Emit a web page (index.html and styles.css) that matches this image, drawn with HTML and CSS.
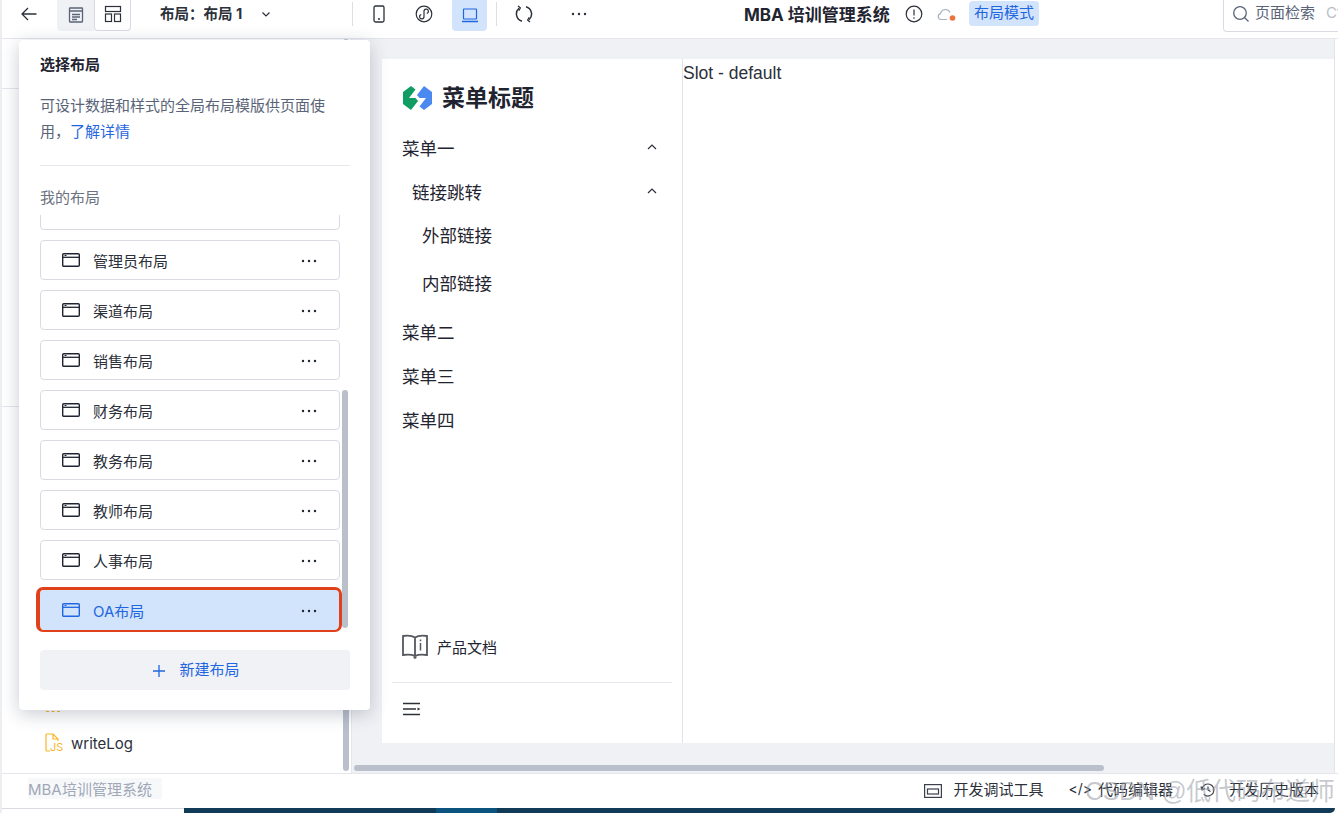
FILE: index.html
```html
<!DOCTYPE html>
<html lang="zh">
<head>
<meta charset="utf-8">
<title>MBA 培训管理系统</title>
<link rel="stylesheet" href="styles.css">
</head>
<body>
<svg class="sprite">
  <symbol id="win" viewBox="0 0 18 14">
    <rect x="0.700" y="0.700" width="16.600" height="12.600" rx="1" fill="none" stroke="currentColor" stroke-width="1.400"/>
    <path d="M1 4.300h16" stroke="currentColor" stroke-width="1.300"/>
    <path d="M2.500 2.500h2" stroke="currentColor" stroke-width="1"/>
  </symbol>
  <symbol id="dots" viewBox="0 0 16 4">
    <circle cx="2" cy="2" r="1.200"/><circle cx="8" cy="2" r="1.200"/><circle cx="14" cy="2" r="1.200"/>
  </symbol>
  <symbol id="up" viewBox="0 0 12 12">
    <path d="M2 8l4-4 4 4" fill="none" stroke="#2b303a" stroke-width="1.200"/>
  </symbol>
</svg>

<div class="app">

  <div class="topbar">
    <svg class="back" width="18" height="18" viewBox="0 0 18 18"><path d="M16.500 9H2M8 3 2 9l6 6" fill="none" stroke="#2b303a" stroke-width="1.300"/></svg>
    <div class="tab tab-on">
      <svg width="18" height="18" viewBox="0 0 18 18" fill="none" stroke="#5a6478" stroke-width="1.300"><rect x="2.500" y="2" width="13" height="14" rx="0.500"/><path d="M2.500 5h13M5 8.500h8M5 11h8M5 13.500h5"/></svg>
    </div>
    <div class="tab tab-line">
      <svg width="18" height="18" viewBox="0 0 18 18" fill="none" stroke="#2b303a" stroke-width="1.200"><rect x="1.500" y="1.500" width="15" height="5"/><rect x="1.500" y="9" width="6" height="7.500"/><rect x="10.500" y="9" width="6" height="7.500"/></svg>
    </div>
    <div class="layout-pick">布局：布局 1</div>
    <svg class="chev" width="12" height="12" viewBox="0 0 12 12"><path d="M2.500 4.500 6 8l3.500-3.500" fill="none" stroke="#2b303a" stroke-width="1.200"/></svg>
    <div class="vline line-a"></div>
    <svg class="phone" width="14" height="18" viewBox="0 0 14 18" fill="none" stroke="#2b303a" stroke-width="1.300"><rect x="2" y="1" width="10" height="16" rx="1.500"/><path d="M6 14h2"/></svg>
    <svg class="mini" width="18" height="18" viewBox="0 0 18 18" fill="none" stroke="#2b303a" stroke-width="1.200"><circle cx="9" cy="9" r="7.800"/><path d="M6.300 9.500a2.200 2.200 0 1 0 2.700 2V6.500a2.200 2.200 0 1 1 2.700 2"/></svg>
    <div class="laptop">
      <svg width="18" height="18" viewBox="0 0 18 18" fill="none" stroke="#1f66e0" stroke-width="1.200"><rect x="2.500" y="3" width="13" height="10" rx="0.500"/><path d="M1 15.500h16" stroke-width="1.500"/></svg>
    </div>
    <div class="vline line-b"></div>
    <svg class="sync" width="18" height="18" viewBox="0 0 18 18" fill="none" stroke="#2b303a" stroke-width="1.500"><path d="M7 16.300A7.600 7.600 0 0 1 4 3.300M11 1.700A7.600 7.600 0 0 1 14 14.700"/><path d="M3 1 5.400 3 3.800 5.600M15 17l-2.400-2 1.600-2.600" stroke-width="1.200"/></svg>
    <svg class="more-top" width="16" height="4" fill="#2b303a"><use href="#dots"/></svg>
    <div class="app-title">MBA 培训管理系统</div>
    <svg class="alert" width="18" height="18" viewBox="0 0 18 18" fill="none" stroke="#2b303a" stroke-width="1.200"><circle cx="9" cy="9" r="7.800"/><path d="M9 4.500v6M9 12.200v1.500"/></svg>
    <svg class="cloud" width="20" height="16" viewBox="0 0 20 16" fill="none"><path d="M10 12.500H4a3 3 0 0 1-.5-5.900A5 5 0 0 1 13 5.500" stroke="#aab2c2" stroke-width="1.200"/><circle cx="15.500" cy="11" r="2.800" fill="#ee7240"/></svg>
    <div class="badge">布局模式</div>
    <div class="search">
      <svg width="18" height="18" viewBox="0 0 18 18" fill="none" stroke="#5a6478" stroke-width="1.300"><circle cx="8" cy="8" r="6.300"/><path d="m12.500 12.500 4 4"/></svg>
      <span class="search-text">页面检索</span>
      <span class="search-key">Ctrl</span>
    </div>
  </div>

  <div class="main">
    <div class="side">
      <div class="side-line side-line-a"></div>
      <div class="side-line side-line-b"></div>
      <div class="side-peek"></div>
      <div class="side-file">
        <svg width="16" height="20" viewBox="0 0 16 20" fill="none" stroke="#f8b62a" stroke-width="1.200"><path d="M6 18H2a1 1 0 0 1-1-1V2a1 1 0 0 1 1-1h6l5 5v4M8 1v5h5"/></svg>
        <span class="js-tag">JS</span>
        <span>writeLog</span>
      </div>
      <div class="side-scroll"></div>
    </div>

    <div class="canvas">
      <div class="page">
        <div class="menu">
          <div class="logo">
            <svg width="29" height="24" viewBox="0 0 29 24"><path d="M0 6 8 0l4.500 3.500L6 12h6.500l2.500 3-7 9-8-6z" fill="#0f9d63"/><path d="m29 18-8 6-4.500-3.500L23 12h-6.500L14 9l7-9 8 6z" fill="#4a8af0"/></svg>
            <span>菜单标题</span>
          </div>
          <div class="menu-row">菜单一
            <svg width="12" height="12"><use href="#up"/></svg>
          </div>
          <div class="menu-row menu-sub">链接跳转
            <svg width="12" height="12"><use href="#up"/></svg>
          </div>
          <div class="menu-links">
            <div class="menu-link">外部链接</div>
            <div class="menu-link">内部链接</div>
          </div>
          <div class="menu-row">菜单二</div>
          <div class="menu-row">菜单三</div>
          <div class="menu-row">菜单四</div>
          <div class="menu-doc">
            <svg width="26" height="26" viewBox="0 0 26 26" fill="none" stroke="#55585f" stroke-width="1.800"><path d="M13 3.500C10 1.500 5 1.500 1 2v19c4-.5 9-.5 12 1 3-1.500 8-1.500 12-1V2c-4-.5-9-.5-12 1.500zM13 3.500V22"/><path d="M18.500 9v7.500M18.500 5.500v1.700" stroke-width="1.500"/><path d="M11.500 22.500h3v1.500l-1.500 1-1.500-1z" fill="#55585f" stroke="none"/></svg>
            <span>产品文档</span>
          </div>
          <div class="menu-foot">
            <svg width="18" height="14" viewBox="0 0 18 14" fill="none" stroke="#2b303a" stroke-width="1.500"><path d="M0 1.500h17M0 7h13M0 12.500h17"/><path d="M14.500 5.500v3l3-1.500z" fill="#2b303a" stroke="none"/></svg>
          </div>
        </div>
        <div class="slot">Slot - default</div>
      </div>
      <div class="canvas-scroll"></div>
    </div>
  </div>

  <div class="statusbar">
    <span class="status-name">MBA 培训管理系统</span>
    <div class="status-tools">
      <div class="tool tool-debug">
        <svg width="18" height="14" viewBox="0 0 18 14" fill="none" stroke="#3a3f4a" stroke-width="1.200"><rect x="0.600" y="0.600" width="16.800" height="12.800"/><rect x="3.500" y="5" width="11" height="5"/></svg>
        <span>开发调试工具</span>
      </div>
      <div class="tool tool-code"><span class="code-mark">&lt;/&gt;</span><span>代码编辑器</span></div>
      <div class="tool tool-hist">
        <svg width="16" height="16" viewBox="0 0 16 16" fill="none" stroke="#3a3f4a" stroke-width="1.200"><path d="M2 8a6 6 0 1 1 1.800 4.300M1 4.500 2 8l3-1.500M8 4.500V8l2.500 1.500"/></svg>
        <span>开发历史版本</span>
      </div>
    </div>
  </div>

  <div class="foot-row">
    <div class="foot-edge"></div>
    <div class="strip">
      <div class="strip-blue"></div>
    </div>
  </div>
</div>

<div class="popover">
  <div class="pop-title">选择布局</div>
  <p class="pop-desc">可设计数据和样式的全局布局模版供页面使用，<a class="pop-link">了解详情</a></p>
  <div class="pop-rule"></div>
  <div class="pop-sub">我的布局</div>
  <div class="pop-list">
    <div class="pop-item pop-item-cut"></div>
    <div class="pop-item">
      <svg class="win" width="18" height="14"><use href="#win"/></svg>
      <span>管理员布局</span>
      <svg class="dots" width="16" height="4"><use href="#dots"/></svg>
    </div>
    <div class="pop-item">
      <svg class="win" width="18" height="14"><use href="#win"/></svg>
      <span>渠道布局</span>
      <svg class="dots" width="16" height="4"><use href="#dots"/></svg>
    </div>
    <div class="pop-item">
      <svg class="win" width="18" height="14"><use href="#win"/></svg>
      <span>销售布局</span>
      <svg class="dots" width="16" height="4"><use href="#dots"/></svg>
    </div>
    <div class="pop-item">
      <svg class="win" width="18" height="14"><use href="#win"/></svg>
      <span>财务布局</span>
      <svg class="dots" width="16" height="4"><use href="#dots"/></svg>
    </div>
    <div class="pop-item">
      <svg class="win" width="18" height="14"><use href="#win"/></svg>
      <span>教务布局</span>
      <svg class="dots" width="16" height="4"><use href="#dots"/></svg>
    </div>
    <div class="pop-item">
      <svg class="win" width="18" height="14"><use href="#win"/></svg>
      <span>教师布局</span>
      <svg class="dots" width="16" height="4"><use href="#dots"/></svg>
    </div>
    <div class="pop-item">
      <svg class="win" width="18" height="14"><use href="#win"/></svg>
      <span>人事布局</span>
      <svg class="dots" width="16" height="4"><use href="#dots"/></svg>
    </div>
    <div class="pop-item pop-item-on">
      <svg class="win" width="18" height="14"><use href="#win"/></svg>
      <span>OA布局</span>
      <svg class="dots" width="16" height="4"><use href="#dots"/></svg>
      <div class="pop-mark"></div>
    </div>
    <div class="pop-scroll"></div>
  </div>
  <div class="pop-new">
    <svg width="14" height="14" viewBox="0 0 14 14" fill="none" stroke="#1f66e0" stroke-width="1.300"><path d="M7 1v12M1 7h12"/></svg>
    <span>新建布局</span>
  </div>
</div>

<div class="watermark">CSDN @低代码布道师</div>
</body>
</html>
```

FILE: styles.css
```css
* { box-sizing: border-box; }

html, body {
  margin: 0;
  height: 813px;
  overflow: hidden;
  background: #fff;
  font-family: "Inter", "Noto Sans CJK SC", sans-serif;
  color: #2b303a;
}

.sprite { display: none; }

.app {
  width: 1338px;
  height: 813px;
  display: flex;
  flex-direction: column;
  border-left: 2px solid #eceef2;
}

/* top bar */
.topbar {
  height: 39px;
  flex: none;
  display: flex;
  align-items: center;
  background: #fff;
  border-bottom: 1px solid #e4e6ec;
  overflow: hidden;
}
.topbar > * { flex: none; }
.back { margin-left: 18px; margin-top: -10px; }
.tab {
  width: 37px;
  height: 31px;
  margin-top: -7px;
  display: flex;
  align-items: center;
  justify-content: center;
}
.tab svg { margin-top: -2px; }
.tab-on { margin-left: 19px; background: #f0f1f5; border-radius: 0 0 0 4px; }
.tab-line { border: 1px solid #d8dbe3; border-top: 0; border-radius: 0 0 4px 4px; }
.layout-pick { margin-left: 29px; margin-top: -13px; font-size: 14.500px; font-weight: 700; width: 90px; white-space: nowrap; }
.chev { margin-left: 10px; margin-top: -10px; }
.vline { width: 1px; height: 24px; background: #dcdfe6; margin-top: -10px; }
.line-a { margin-left: 80px; }
.phone { margin-left: 19px; margin-top: -10px; }
.mini { margin-left: 29px; margin-top: -10px; }
.laptop {
  width: 35px;
  height: 31px;
  margin-left: 19px;
  margin-top: -7px;
  background: #d2e3fc;
  border-radius: 0 0 4px 4px;
  display: flex;
  align-items: center;
  justify-content: center;
}
.laptop svg { margin-top: -2px; }
.line-b { margin-left: 9px; }
.sync { margin-left: 18px; margin-top: -10px; }
.more-top { margin-left: 38px; margin-top: -10px; color: #2b303a; }
.app-title { margin-left: 157px; margin-top: -11px; width: 146px; font-size: 17px; font-weight: 700; color: #1f2430; white-space: nowrap; }
.alert { margin-left: 15px; margin-top: -10px; }
.cloud { margin-left: 14px; margin-top: -9px; }
.badge {
  margin-left: 12px;
  margin-top: -11px;
  width: 70px;
  height: 25px;
  background: #d2e3fc;
  color: #1f66e0;
  font-size: 15px;
  line-height: 23px;
  text-align: center;
  border-radius: 4px;
}
.search {
  align-self: flex-start;
  margin-left: 184px;
  width: 115px;
  height: 32px;
  padding: 5px 0 0 8px;
  display: flex;
  align-items: flex-start;
  overflow: hidden;
  border: 1px solid #d8dbe3;
  border-top: 0;
  border-right: 0;
  border-radius: 0 0 0 4px;
  font-size: 15px;
  line-height: 22px;
  white-space: nowrap;
}
.search svg { flex: none; }
.search-text { margin-left: 5px; margin-top: -3px; color: #5a6478; }
.search-key { margin-left: 11px; margin-top: -3px; color: #b8bdc9; }

/* main area */
.main { flex: 1; min-height: 0; display: flex; padding-right: 3px; }

.side {
  width: 350px;
  flex: none;
  position: relative;
  background: #fff;
  border-right: 1px solid #e4e6ec;
}
.side-line { position: absolute; left: 0; width: 20px; height: 1px; background: #e4e6ec; }
.side-line-a { top: 49px; }
.side-line-b { top: 367px; }
.side-peek {
  position: absolute;
  left: 44px;
  top: 672px;
  width: 14px;
  border-top: 1px dashed #f8b62a;
}
.side-file {
  position: absolute;
  left: 43px;
  top: 693px;
  height: 22px;
  display: flex;
  align-items: center;
  font-size: 15px;
  color: #2b303a;
}
.side-file svg { margin-right: 10px; }
.js-tag {
  position: absolute;
  left: 5px;
  top: 9px;
  font-size: 11px;
  line-height: 12px;
  color: #f8b62a;
  background: #fff;
}
.side-scroll {
  position: absolute;
  left: 341px;
  top: 0;
  bottom: 2px;
  width: 6px;
  background: #b9c0cc;
  border-radius: 3px;
}

.canvas {
  flex: 1;
  min-width: 0;
  background: #f0f1f5;
  padding: 20px 0 0 30px;
  position: relative;
  border-right: 1px solid #e1e3e8;
}
.page {
  height: 684px;
  background: #fff;
  display: flex;
}
.canvas-scroll {
  position: absolute;
  left: 2px;
  bottom: 2px;
  width: 750px;
  height: 6px;
  background: #b9c0cc;
  border-radius: 3px;
}

/* menu inside the page */
.menu {
  width: 301px;
  flex: none;
  display: flex;
  flex-direction: column;
  padding: 0 10px;
  border-right: 1px solid #e1e3e8;
  color: #1f2430;
}
.logo {
  height: 66px;
  padding: 9px 0 0 11px;
  display: flex;
  align-items: center;
  font-size: 23px;
  font-weight: 700;
}
.logo svg { margin-top: 3px; }
.logo span { margin-left: 10px; margin-top: -1px; }
.menu-row {
  height: 44px;
  padding: 0 14px 0 10px;
  display: flex;
  align-items: center;
  justify-content: space-between;
  font-size: 17.500px;
}
.menu-sub { padding-left: 20px; }
.menu-links { margin: -1px 0 1px; }
.menu-link { height: 48px; line-height: 48px; padding-left: 30px; font-size: 17.500px; }
.menu-doc {
  margin-top: auto;
  height: 49px;
  padding: 0 0 22px 10px;
  display: flex;
  align-items: center;
  font-size: 15px;
}
.menu-doc span { margin-left: 9px; }
.menu-foot {
  height: 61px;
  padding: 17px 0 0 11px;
  border-top: 1px solid #e6e8ed;
}
.slot {
  padding: 2px 0 0;
  font-family: "Liberation Sans", sans-serif;
  font-size: 17.500px;
  line-height: 24px;
  color: #2b303a;
}

/* status bar */
.statusbar {
  height: 35px;
  flex: none;
  display: flex;
  align-items: center;
  justify-content: space-between;
  padding-bottom: 6px;
  background: #fff;
  border-top: 1px solid #e4e6ec;
  font-size: 15px;
}
.status-name {
  margin-left: 26px;
  padding-right: 10px;
  color: #a0a8b8;
  background: #f7f8fa;
  white-space: nowrap;
  word-spacing: -4px;
}
.status-tools { display: flex; align-items: center; }
.tool { display: flex; align-items: center; }
.tool svg { margin-top: 6px; }
.tool-debug svg { margin-right: 11px; }
.tool-code { margin-left: 25px; }
.code-mark { margin-right: 6px; font-size: 14px; }
.tool-hist { margin-left: 27px; margin-right: 19px; }
.tool-hist svg { margin-right: 13px; margin-top: 3px; }

.foot-row { height: 5px; flex: none; display: flex; }
.foot-edge {
  width: 182px;
  flex: none;
  border-top: 1px solid #d9dbe0;
  border-bottom-left-radius: 4px;
}
.strip {
  flex: 1;
  margin-right: 3px;
  background: #103a56;
  position: relative;
  border-bottom-right-radius: 5px;
}
.strip-blue {
  position: absolute;
  left: 252px;
  top: 0;
  width: 61px;
  height: 5px;
  background: #0b527f;
}

/* layout popover */
.popover {
  position: absolute;
  left: 19px;
  top: 40px;
  width: 351px;
  height: 670px;
  padding: 0 0 0 21px;
  background: #fff;
  border-radius: 4px;
  box-shadow: 0 4px 18px rgba(30, 40, 70, .24);
}
.pop-title {
  padding-top: 14px;
  height: 47px;
  font-size: 15px;
  line-height: 21px;
  font-weight: 700;
  color: #1f2430;
}
.pop-desc {
  margin: 6px 0 0;
  width: 300px;
  font-size: 15px;
  line-height: 26px;
  color: #5a6478;
}
.pop-link { color: #1f66e0; }
.pop-rule { margin-top: 20px; width: 310px; height: 1px; background: #e6e8ed; }
.pop-sub { margin-top: 21px; font-size: 15px; line-height: 21px; color: #6b7280; }
.pop-list {
  position: relative;
  margin: 7px 0 0 -6px;
  padding-left: 6px;
  height: 420px;
  overflow: hidden;
}
.pop-item {
  position: relative;
  width: 300px;
  height: 40px;
  margin-bottom: 10px;
  display: flex;
  align-items: center;
  padding: 0 22px 0 21px;
  background: #fff;
  border: 1px solid #d8dbe3;
  border-radius: 4px;
  color: #2b303a;
  font-size: 15px;
}
.pop-item .win { color: #1f2430; }
.pop-item span { margin-left: 13px; margin-top: 1px; }
.pop-item .dots { margin-left: auto; margin-top: 1px; color: #1f2430; fill: #1f2430; }
.pop-item-cut { margin-top: -25px; }
.pop-item-on {
  background: #d2e3fc;
  color: #1f66e0;
  border-color: #d2e3fc;
  margin-bottom: 0;
}
.pop-item-on .win { color: #1f66e0; }
.pop-mark {
  position: absolute;
  z-index: 1;
  top: -4px;
  right: -3px;
  bottom: -3px;
  left: -5px;
  border: solid #e0401a;
  border-width: 3px 3px 2px 4px;
  border-radius: 7px;
}
.pop-scroll {
  position: absolute;
  left: 308px;
  top: 175px;
  width: 6px;
  height: 238px;
  background: #b9c0cc;
  border-radius: 3px;
}
.pop-new {
  margin-top: 15px;
  padding-left: 2px;
  width: 310px;
  height: 40px;
  display: flex;
  align-items: center;
  justify-content: center;
  background: #f1f2f6;
  border-radius: 4px;
  color: #1f66e0;
  font-size: 15px;
}
.pop-new svg { margin-top: 1px; }
.pop-new span { margin-left: 13px; margin-top: -3px; }

.watermark {
  position: absolute;
  left: 1085px;
  top: 772px;
  font-size: 25px;
  line-height: 38px;
  white-space: nowrap;
  color: rgba(150, 155, 165, .55);
  font-family: "Liberation Sans", "Noto Sans CJK SC", sans-serif;
  letter-spacing: -.3px;
}
```
